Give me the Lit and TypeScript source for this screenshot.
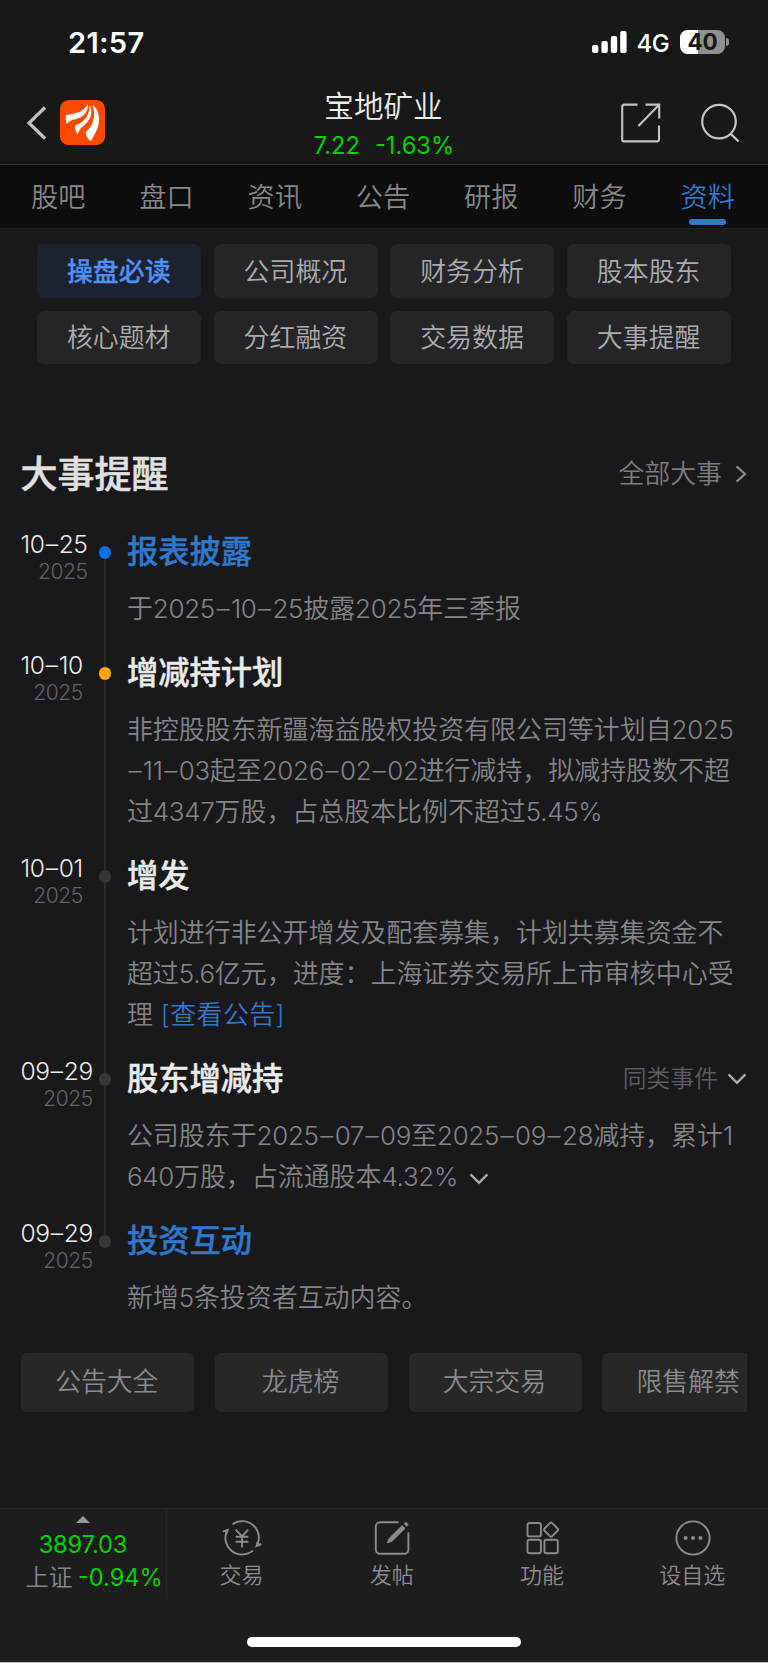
import { LitElement, html, css, svg } from "lit";
import { customElement } from "lit/decorators.js";
import { classMap } from "lit/directives/class-map.js";

interface StockEvent {
  day: string;
  year: string;
  title: string;
  tone: "blue" | "orange" | "plain";
  link?: boolean;
  lines: string[];
  action?: string;
  similar?: boolean;
  expandable?: boolean;
}

const TABS = ["股吧", "盘口", "资讯", "公告", "研报", "财务", "资料"];
const SECTIONS = ["操盘必读", "公司概况", "财务分析", "股本股东", "核心题材", "分红融资", "交易数据", "大事提醒"];
const SHORTCUTS = ["公告大全", "龙虎榜", "大宗交易", "限售解禁"];

const EVENTS: StockEvent[] = [
  { day: "10–25", year: "2025", title: "报表披露", tone: "blue", link: true, lines: ["于2025–10–25披露2025年三季报"] },
  {
    day: "10–10", year: "2025", title: "增减持计划", tone: "orange",
    lines: ["非控股股东新疆海益股权投资有限公司等计划自2025", "–11–03起至2026–02–02进行减持，拟减持股数不超", "过4347万股，占总股本比例不超过5.45%"],
  },
  {
    day: "10–01", year: "2025", title: "增发", tone: "plain",
    lines: ["计划进行非公开增发及配套募集，计划共募集资金不", "超过5.6亿元，进度：上海证券交易所上市审核中心受", "理"],
    action: "[查看公告]",
  },
  {
    day: "09–29", year: "2025", title: "股东增减持", tone: "plain", similar: true, expandable: true,
    lines: ["公司股东于2025–07–09至2025–09–28减持，累计1", "640万股，占流通股本4.32%"],
  },
  { day: "09–29", year: "2025", title: "投资互动", tone: "plain", link: true, lines: ["新增5条投资者互动内容。"] },
];

const chevronDown = html`<svg class="chev" width="20" height="12" viewBox="0 0 20 12"><path d="M1.6 1.4 10 9.8 18.4 1.4" /></svg>`;

/* Digits carry their own tracking and dashes get air on both sides. */
const withNumbers = (text: string) =>
  text
    .split(/([0-9.%]+|–)/)
    .map((part, i) => (i % 2 ? html`<span class=${part === "–" ? "dash" : "num"}>${part}</span>` : part));

const NAV = [
  {
    label: "交易",
    icon: svg`<path d="M10.6 4.2A16.6 16.6 0 0 1 34.7 25.9L39.4 24M31 30.4A16.6 16.6 0 0 1 5.4 10.1L.8 11.6"/><path d="M5.2 9.6 4.6 13.6M35 26.2 35.8 22" stroke-width="2.4"/><path d="M13.8 9.6 20 16.4 26.2 9.6M20 16.4V27.4M13.6 16.8H26.4M13.6 21.8H26.4"/>`,
  },
  {
    label: "发帖",
    icon: svg`<path d="M26.5 2.2H8.2A4.4 4.4 0 0 0 3.8 6.6V29.4A4.4 4.4 0 0 0 8.2 33.8H32A4.4 4.4 0 0 0 36.4 29.4V12.2"/><path d="M15.3 22.8 17.2 18.4 30.2 5.6 33 8.4 20 21.2Z" fill="currentColor" stroke-width="1"/><path d="M33.2 5.2 35.3 3.2" stroke-width="4"/>`,
  },
  {
    label: "功能",
    icon: svg`<rect x="4.5" y="3" width="13.4" height="13.4" rx="2"/><rect x="4.5" y="19.8" width="13.4" height="13.4" rx="2"/><rect x="21.4" y="19.8" width="13.4" height="13.4" rx="2"/><rect x="22.7" y="4.2" width="10.8" height="10.8" rx="1.6" transform="rotate(45 28.1 9.6)"/>`,
  },
  {
    label: "设自选",
    icon: svg`<circle cx="20" cy="18" r="16.6"/><g fill="currentColor" stroke="none"><circle cx="12.6" cy="18" r="2"/><circle cx="20" cy="18" r="2"/><circle cx="27.4" cy="18" r="2"/></g>`,
  },
];

@customElement("app-root")
export class AppRoot extends LitElement {
  static styles = css`
    :host {
      display: flex;
      flex-direction: column;
      box-sizing: border-box;
      height: 1663px;
      width: 768px;
      overflow: hidden;
      background: #19191b;
      border-bottom: 1px solid #c9c9c9;
      font-family: Inter, "Noto Sans CJK SC", sans-serif;
      font-weight: 350;
      color: #e0e0e0;
    }
    * { box-sizing: border-box; }
    svg { display: block; flex: none; fill: none; }
    .status {
      height: 80px;
      background: #181818;
      display: flex;
      align-items: center;
      padding: 4px 39px 0 68px;
      color: #fff;
    }
    .time { flex: 1; font-size: 29px; font-weight: 600; line-height: 34px; letter-spacing: 0.4px; padding-top: 1px; }
    .net { font-size: 24px; font-weight: 500; line-height: 30px; margin: 3px 11px 0 10px; letter-spacing: -0.6px; }
    .battery {
      width: 45px; height: 24px; border-radius: 7.5px;
      background: linear-gradient(90deg, #fff 18px, #8f8f8f 18px);
      color: #181818; font-size: 22.5px; font-weight: 700; line-height: 24px; text-align: center; letter-spacing: -0.2px;
    }
    .nub { width: 3px; height: 8px; margin-left: 1px; border-radius: 0 4px 4px 0; background: #8f8f8f; }
    .header {
      height: 85px;
      background: #181818;
      border-bottom: 1px solid #2c2c2c;
      display: grid;
      grid-template-columns: 240px 1fr 240px;
      color: #c4c4c4;
    }
    .left { display: flex; align-items: center; padding: 0 0 0.6px 26px; gap: 12px; }
    .right { display: flex; align-items: center; justify-content: flex-end; padding: 0 28px 0.6px 0; gap: 39px; }
    .center { display: flex; flex-direction: column; align-items: center; padding-top: 7px; }
    .name { font-size: 29.6px; line-height: 39px; margin-left: -1px; color: #ececec; }
    .quote { display: flex; gap: 15px; font-size: 23.7px; line-height: 40px; font-weight: 400; color: #00d200; }
    .tabs {
      height: 64px;
      background: #0d0d0d;
      border-bottom: 1px solid #222224;
      display: flex;
      justify-content: space-between;
      padding: 11px 33px 0 31px;
    }
    .tab { display: flex; flex-direction: column; align-items: center; font-size: 27.2px; line-height: 43px; color: #87878a; }
    .tab.on { color: #2f78ca; }
    .tab.on::after { content: ""; width: 37px; height: 6px; border-radius: 3px; background: #3377c8; }
    .chips {
      display: grid;
      grid-template-columns: repeat(4, 1fr);
      grid-auto-rows: 53.7px;
      gap: 12.5px;
      padding: 15.4px 37px 0;
    }
    .chip {
      display: flex; align-items: center; justify-content: center;
      border-radius: 7px; background: #252527; color: #acacae;
      font-size: 25.9px; line-height: 40px; padding: 1.4px 0.6px 0 0;
    }
    .chip.on { background: #1c2230; color: #4f8ff6; font-weight: 500; }
    .chip.on span { -webkit-text-stroke: 0.3px currentColor; }
    .section { display: flex; align-items: center; justify-content: space-between; margin-top: 85.2px; height: 50px; padding: 0 21px 0 20.5px; }
    .h { font-size: 37px; line-height: 50px; font-weight: 500; color: #e0e0e0; padding-top: 1px; -webkit-text-stroke: 0.5px currentColor; }
    .all { display: flex; align-items: center; gap: 13px; font-size: 25.9px; line-height: 40px; color: #7c7c7e; }
    .events { display: flex; flex-direction: column; padding: 29.5px 21px 0 20.5px; }
    .event { display: grid; grid-template-columns: 106.4px 1fr; }
    .rail { display: grid; grid-template-columns: 78.2px 12.6px; }
    .date { justify-self: start; width: max-content; text-align: right; padding-top: 1px; }
    .day { font-size: 24.6px; line-height: 28px; letter-spacing: -0.4px; color: #ececec; }
    .day .dash { margin: 0 1.1px; }
    .year { font-size: 21px; line-height: 27px; letter-spacing: -0.4px; color: #636365; }
    .track { display: flex; flex-direction: column; align-items: center; background: linear-gradient(#2a2a2c, #2a2a2c) center / 2px 100% no-repeat; }
    .event:first-child .track { background-position: center 24px; }
    .event:last-child .track { background-size: 2px 24px; background-position: center top; }
    .dot { width: 12.6px; height: 12.6px; border-radius: 50%; margin-top: 17.2px; background: #363638; }
    .dot.blue { background: #0a6fe0; }
    .dot.orange { background: #ffa800; }
    .body { padding-bottom: 20.8px; }
    .title { display: flex; align-items: center; justify-content: space-between; height: 44px; line-height: 44px; font-size: 31.3px; font-weight: 500; color: #ebebeb; }
    .title > span { padding-top: 1.2px; -webkit-text-stroke: 0.4px currentColor; }
    .title.link { color: #2f78ca; }
    .similar { display: flex; align-items: center; gap: 9px; font-size: 23.8px; font-weight: 350; color: #5d5d5f; padding-top: 1.2px; }
    .chev { stroke: #aaaaac; stroke-width: 2.4; }
    .text { margin-top: 15.5px; margin-bottom: -0.3px; }
    .line { display: flex; align-items: center; height: 41px; line-height: 41px; font-size: 25.95px; white-space: pre; color: #858588; }
    .line .num { letter-spacing: -0.3px; }
    .line .dash { margin: 0 1.5px; }
    .line .chev { margin: 4px 0 0 11px; }
    .action { color: #2f78ca; margin-left: 8px; letter-spacing: 0.4px; }
    .shortcuts { display: flex; gap: 20.5px; margin: 13.9px 21px 0; overflow: hidden; }
    .shortcut {
      flex: none; width: 173.3px; height: 58.7px; border-radius: 6px; background: #272727;
      display: flex; align-items: center; justify-content: center; padding: 0 1.8px 4.5px 0;
      font-size: 25.8px; color: #8a8a8d;
    }
    .bottom { margin-top: auto; height: 154px; background: #1d1d1d; border-top: 1px solid #2a2a2a; display: flex; flex-direction: column; align-items: center; justify-content: space-between; padding-bottom: 15px; }
    .bar { display: flex; width: 100%; height: 90px; }
    .index { width: 167px; border-right: 1px solid #262626; display: flex; flex-direction: column; align-items: center; padding-top: 7px; color: #00d200; font-weight: 400; font-size: 23.6px; }
    .index-value { line-height: 32px; margin-top: 6px; letter-spacing: -0.1px; }
    .index-row { display: flex; gap: 5.5px; line-height: 33px; padding-left: 22px; white-space: nowrap; }
    .index-name { color: #87878a; font-weight: 350; }
    .nav { flex: 1; display: flex; flex-direction: column; align-items: center; padding-top: 11px; font-size: 22px; line-height: 30px; color: #8c8c90; }
    .nav svg { stroke: currentColor; stroke-width: 1.9; margin-bottom: 4px; }
    .nav span { margin-right: 1px; }
    .home { width: 274px; height: 10px; border-radius: 5px; background: #fff; }
  `;

  private renderEvent(e: StockEvent) {
    const last = e.lines.length - 1;
    return html`<div class="event">
      <div class="rail">
        <div class="date"><div class="day">${withNumbers(e.day)}</div><div class="year">${e.year}</div></div>
        <div class="track"><div class=${classMap({ dot: true, [e.tone]: true })}></div></div>
      </div>
      <div class="body">
        <div class=${classMap({ title: true, link: !!e.link })}>
          <span>${e.title}</span>
          ${e.similar ? html`<div class="similar"><span>同类事件</span>${chevronDown}</div>` : ""}
        </div>
        <div class="text">
          ${e.lines.map(
            (l, i) => html`<div class="line"><span>${withNumbers(l)}</span>${i === last && e.action ? html`<span class="action">${e.action}</span>` : ""}${i === last && e.expandable ? chevronDown : ""}</div>`
          )}
        </div>
      </div>
    </div>`;
  }

  render() {
    return html`
      <div class="status">
        <div class="time">21:57</div>
        <svg width="35" height="22" viewBox="0 0 35 22"><g fill="#fff"><rect y="14" width="6.4" height="8" rx="2"/><rect x="9.4" y="10" width="6.4" height="12" rx="2"/><rect x="18.8" y="5" width="6.4" height="17" rx="2"/><rect x="28.2" width="6.4" height="22" rx="2"/></g></svg>
        <div class="net">4G</div>
        <div class="battery">40</div>
        <div class="nub"></div>
      </div>
      <div class="header">
        <div class="left">
          <svg width="22" height="34" viewBox="0 0 22 34"><path d="M19 1.5 3 17 19 32.5" stroke="#c0c0c0" stroke-width="3.2"/></svg>
          <svg width="45" height="45" viewBox="180 298 135 135"><rect x="180" y="298" width="135" height="135" rx="26" fill="#ff4800"/><g fill="#fff"><path d="M198 343C225 340 248 335 264 311C266 334 247 352 225 356C214 358 206 363 200 370C197 362 197 352 198 343Z"/><path d="M268 312C282 335 270 360 251 375C242 382 236 390 233 401C226 392 224 382 226 374C252 365 270 345 268 312Z"/><path d="M277 312C296 325 300 350 295 375C291 392 280 405 273 422C264 415 257 405 257 394C275 380 291 350 277 312Z"/></g></svg>
        </div>
        <div class="center">
          <div class="name">宝地矿业</div>
          <div class="quote"><span>7.22</span><span>-1.63%</span></div>
        </div>
        <div class="right">
          <svg width="40" height="40" viewBox="0 0 40 40"><g stroke="#c4c4c4" stroke-width="2.1"><path d="M16.5 1.6H3.2A2 2 0 0 0 1.2 3.6V36.4A2 2 0 0 0 3.2 38.4H36A2 2 0 0 0 38 36.4V22.6"/><path d="M24.5 1.6H38.2V15.6M37.6 2.2 17.4 23"/></g></svg>
          <svg width="40" height="40" viewBox="0 0 40 40"><g stroke="#c4c4c4" stroke-width="2.2"><circle cx="19" cy="18.6" r="16.8"/><path d="M30.4 30.6 38.6 38.4"/></g></svg>
        </div>
      </div>
      <div class="tabs">${TABS.map((t, i) => html`<div class=${classMap({ tab: true, on: i === 6 })}>${t}</div>`)}</div>
      <div class="chips">${SECTIONS.map((s, i) => html`<div class=${classMap({ chip: true, on: i === 0 })}><span>${s}</span></div>`)}</div>
      <div class="section">
        <div class="h">大事提醒</div>
        <div class="all"><span>全部大事</span><svg width="12" height="18" viewBox="0 0 12 18"><path d="M1.6 1.4 10 9 1.6 16.6" stroke="#8a8a8c" stroke-width="2.2"/></svg></div>
      </div>
      <div class="events">${EVENTS.map((e) => this.renderEvent(e))}</div>
      <div class="shortcuts">${SHORTCUTS.map((s) => html`<div class="shortcut">${s}</div>`)}</div>
      <div class="bottom">
        <div class="bar">
          <div class="index">
            <svg width="14" height="7" viewBox="0 0 14 7"><path d="M7 0 14 7H0Z" fill="#98989c"/></svg>
            <div class="index-value">3897.03</div>
            <div class="index-row"><span class="index-name">上证</span><span>-0.94%</span></div>
          </div>
          ${NAV.map((n) => html`<div class="nav"><svg width="40" height="36" viewBox="0 0 40 36">${n.icon}</svg><span>${n.label}</span></div>`)}
        </div>
        <div class="home"></div>
      </div>
    `;
  }
}
